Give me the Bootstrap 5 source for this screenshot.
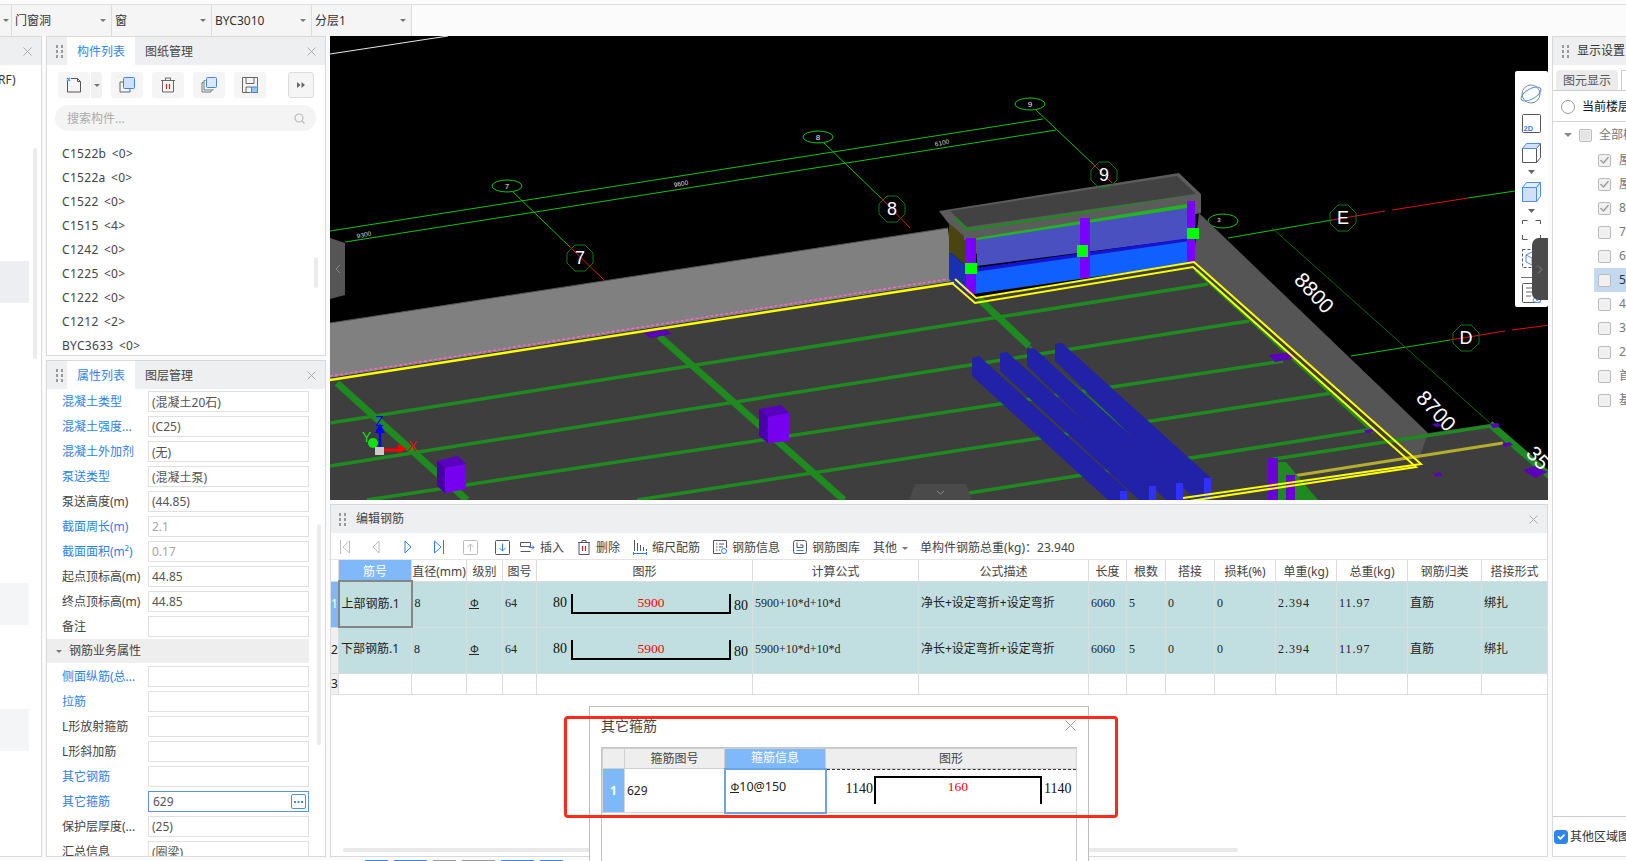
<!DOCTYPE html>
<html lang="zh-CN">
<head>
  <meta charset="UTF-8" />
  <meta name="viewport" content="width=device-width, initial-scale=1" />
  <title>编辑钢筋</title>
  <link href="https://cdn.jsdelivr.net/npm/bootstrap@5.3.0/dist/css/bootstrap.min.css" rel="stylesheet">
  <style>
    body {
      font-family: "Noto Sans", "Noto Sans CJK SC", sans-serif;
      font-size: 12px;
      color: #333;
      background: #fbfbfb;
      height: 861px;
      overflow: hidden;
    }

    /* top selects */
    .sel-bar { height: 32px; margin-top: 4px; border-top: 1px solid #e0e0e0; }
    .sel-item {
      width: 100px;
      background: #f5f5f5;
      border-right: 1px solid #ddd;
      padding: 0 5px 0 3px;
      position: relative;
    }
    .sel-stub { width: 12px; background: #f5f5f5; border-right: 1px solid #ddd; }
    .caret-down {
      display: inline-block;
      border-left: 3px solid transparent;
      border-right: 3px solid transparent;
      border-top: 3px solid #777;
    }

    .work-area { height: 821px; }
    .pane-box { background: #fff; border: 1px solid #d9d9d9; position: relative; overflow: hidden; }
    .pane-head { height: 28px; background: #eeeff1; flex-shrink: 0; }
    .drag-dots { width: 20px; flex-shrink: 0; display: flex; justify-content: flex-start; padding-left: 9px; }
    .pane-x { margin-left: auto; margin-right: 9px; }

    .pane-tabs .nav-link { color: #444; padding: 0; height: 28px; line-height: 30px; width: 68px; text-align: center; font-size: 12px; }
    .pane-tabs .nav-link.active { background: #fff; color: #2f86ea; }

    /* left cut-off pane */
    .pane-cut { width: 42px; border-left: 0; }
    .cut-text { margin: 7px 0 0 -2px; line-height: 16px; height: 16px; }
    .cut-hl { width: 29px; height: 42px; background: #f4f5f7; }
    .cut-hl-a { margin-top: 173px; background: #eceef2; }
    .cut-hl-b { margin-top: 280px; }
    .cut-hl-c { margin-top: 84px; }
    .thin-scroll { position: absolute; width: 4px; background: #ececec; border-radius: 2px; }

    .mid-col { width: 280px; margin-left: 4px; gap: 4px; }
    .list-pane { height: 320px; flex-shrink: 0; }
    .prop-pane { flex: 1 1 0; min-height: 0; }

    .icon-row { padding: 7px 11px 0 11px; height: 35px; }
    .icon-btn { width: 32px; height: 26px; padding: 0; background: #f5f5f5; border: 0; border-radius: 3px; display: flex; align-items: center; justify-content: center; }
    .icon-btn-drop { width: 12px; background: #f1f1f1; border-left: 1px solid #fff; border-radius: 0 3px 3px 0; }
    .icon-btn-more { width: 26px; border: 1px solid #ddd; margin-left: auto; }

    .find-box { margin: 5px 9px 0 8px; height: 26px; border-radius: 13px; background: #f4f4f4; padding: 1px 11px 0 12px; color: #aaa; }

    .part-list { margin-top: 10px; }
    .part-list .list-group-item { height: 24px; line-height: 25px; padding: 0 0 0 15px; border: 0; font-size: 12px; letter-spacing: .3px; word-spacing: 2px; color: #444; }

    /* property grid */
    .prop-line { height: 25px; padding-left: 15px; width: 263px; }
    .prop-name { width: 86px; flex-shrink: 0; white-space: nowrap; color: #444; }
    .prop-name.is-link { color: #2f7fe6; }
    .prop-line .form-control {
      height: 21px;
      min-height: 0;
      width: 161px;
      padding: 0 3px;
      font-size: 12px;
      line-height: 19px;
      border: 1px solid #e0e0e0;
      border-radius: 0;
      color: #555;
      flex-shrink: 0;
      box-shadow: none;
    }
    .prop-line .form-control.is-off { color: #a5a5a5; }
    .prop-group { height: 24px; margin-bottom: 1px; background: #eeeeee; width: 262px; padding-left: 9px; gap: 7px; color: #444; }
    .prop-edit { position: relative; width: 161px; flex-shrink: 0; }
    .prop-edit .form-control { border-color: #5b93e0; padding-left: 4px; }
    .more-dots {
      position: absolute; right: 3px; top: 3px; width: 15px; height: 15px;
      border: 1px solid #4b8fe6; border-radius: 2px; display: flex; align-items: center; justify-content: center;
    }

    /* centre */
    .mid-stage { width: 1218px; margin-left: 4px; gap: 4px; }
    .scene-box { height: 464px; position: relative; background: #000; overflow: hidden; flex-shrink: 0; }
    .scene-box svg { display: block; }
    .view-bar { position: absolute; left: 1185px; top: 35px; width: 33px; height: 236px; background: #fff; border-radius: 2px; }
    .view-grip {
      position: absolute; left: 1202px; top: 202px; width: 16px; height: 62px;
      background: #4a4a4a; border-radius: 7px 0 0 7px; display: flex; align-items: center; justify-content: center;
    }

    .rebar-pane { flex: 1 1 auto; overflow: visible; position: relative; }
    .rebar-title { font-size: 12px; color: #444; line-height: 30px; }
    .rebar-tools { height: 27px; padding-top: 2px; border-bottom: 1px solid #e4e4e4; margin-left: -2px; white-space: nowrap; }
    .nav-step { width: 31.5px; display: flex; justify-content: center; flex-shrink: 0; }
    .tool-item { margin-left: 13px; gap: 5px; color: #444; }
    .tool-item > span { margin-top: 2px; }
    .tool-first { margin-left: 2px; }
    .tool-sum { margin: 2px 0 0 12px; color: #444; }

    .rebar-grid, .hoop-grid { table-layout: fixed; border-collapse: collapse; --bs-table-bg: transparent; margin: 0; }
    .rebar-grid { width: 1217px; margin-left: -1px; }
    .table.rebar-grid > * > * > *,
    .table.hoop-grid > * > * > * {
      padding: 0 2px;
      font-size: 12px;
      font-weight: 400;
      color: #222;
      border: 1px solid #dcdcdc;
      vertical-align: middle;
      white-space: nowrap;
      overflow: hidden;
      box-shadow: none;
    }
    .table.rebar-grid > thead > tr > th { height: 21px; text-align: center; line-height: 16px; color: #444; padding: 4px 0 0; border-top: 0; }
    .table.rebar-grid > thead > tr > th.col-on,
    .table.hoop-grid > thead > tr > th.col-on { background: #80b9fa; color: #fff; }
    .table.rebar-grid > tbody > tr.bar-row > td { height: 46px; background: #c1dee0; padding-bottom: 2px; }
    .table.rebar-grid > tbody > tr.blank-row > td { height: 21px; }
    .table.rebar-grid > tbody > tr > td.row-no { padding: 0; text-align: center; background: #f0f0f0; }
    .table.rebar-grid > tbody > tr > td.row-no.is-on { background: #7db8f8; color: #fff; }
    .table.rebar-grid > tbody > tr > td.cell-on { border: 2px solid #868686; padding-bottom: 0; }
    .table.rebar-grid > tbody > tr > td.cell-num { font-family: "Liberation Serif", "Noto Sans CJK SC", serif; padding-left: 2px; }
    .table.rebar-grid > tbody > tr > td.cell-dec { letter-spacing: 1px; }
    .table.rebar-grid > tbody > tr > td.cell-shape { padding: 0 0 0 16px; }

    .bar-num { font-family: "Liberation Serif", serif; font-size: 14px; line-height: 16px; color: #111; margin-top: 1px; }
    .bar-num-end { margin-top: 4px; }
    .bar-shape {
      width: 160px; height: 20px; border: solid #000; border-width: 0 2px 2px 2px;
      color: #f00; text-align: center; margin: 0 3px 0 4px;
      font-family: "Liberation Serif", serif; font-size: 13.5px; line-height: 18px;
    }
    .rebar-sym {
      display: inline-block; font-family: "Liberation Sans", sans-serif; font-size: 11px; line-height: 10px;
      border-bottom: 1px solid #222; padding: 0 0 0 1px; color: #222; vertical-align: middle;
    }

    .slide-rail { position: absolute; left: 12px; top: 343px; width: 895px; height: 4px; background: #e9e9e9; border-radius: 2px; }

    /* hoop dialog */
    .hoop-dlg {
      position: absolute; left: 258px; top: 201px; width: 500px; height: 156px;
      background: #fff; border: 1px solid #bdbdbd; border-bottom: 0; z-index: 5; padding: 0 11px;
    }
    .hoop-head { height: 40px; padding-top: 9px; font-size: 14px; line-height: 20px; color: #444; position: relative; }
    .hoop-x { position: absolute; right: 1px; top: 13px; }
    .hoop-frame { height: 115px; border: solid #c4c4c4; border-width: 1px 1px 0 1px; }
    .hoop-grid { width: 474px; }
    .table.hoop-grid > thead > tr > th { height: 20px; background: #eeeeee; text-align: center; line-height: 18px; padding: 0; color: #444; border-color: #d0d0d0; }
    .table.hoop-grid > tbody > tr > td { height: 44px; border-color: #d4d4d4; }
    .table.hoop-grid > tbody > tr > td.row-no { background: #7db8f8; color: #fff; text-align: center; padding: 0; font-weight: 700; }
    .table.hoop-grid > tbody > tr > td.cell-on { border: 2px solid #6aa5e6; padding: 0 0 6px 4px; font-size: 12.5px; }
    .table.hoop-grid > tbody > tr > td.cell-draw { padding: 0; }
    .hoop-draw { height: 43px; border-top: 1px dashed #333; padding: 6px 0 0 19px; }
    .hoop-shape {
      width: 168px; height: 28px; border: solid #000; border-width: 2px 2px 0 2px; color: #f00; text-align: center; margin: 0 2px 0 1px;
      font-family: "Liberation Serif", serif; font-size: 13.5px; line-height: 18px;
    }
    .mark-box {
      position: absolute; left: 233px; top: 211px; width: 554px; height: 102px;
      border: 3px solid #ff2a1a; border-radius: 4px; z-index: 6; pointer-events: none;
    }

    /* right pane */
    .right-pane { width: 74px; margin-left: 4px; border-right: 0; white-space: nowrap; }
    .right-tabs { height: 26px; padding: 5px 0 0 3px; gap: 3px; border-bottom: 1px solid #ccc; }
    .right-tab { width: 62px; background: #ececec; border-radius: 4px 4px 0 0; text-align: center; line-height: 21px; color: #555; flex-shrink: 0; }
    .right-tab-b { width: 30px; background: #fff; border: 1px solid #ccc; border-bottom: 0; flex-shrink: 0; }
    .floor-radio { height: 31px; padding: 1px 0 0 8px; gap: 7px; border-bottom: 1px solid #d5d5d5; color: #111; }
    .floor-radio .form-check-input { width: 14px; height: 14px; margin: 0; border-color: #999; flex-shrink: 0; }
    .floor-tree { padding-top: 1px; }
    .floor-row { height: 24px; gap: 8px; color: #777; }
    .floor-root { padding-left: 11px; gap: 7px; margin-bottom: 1px; }
    .floor-root .caret-down { border-width: 4px 4px 0 4px; border-top-color: #888; }
    .floor-kid { padding-left: 45px; }
    .floor-kid.is-on { margin-left: 41px; padding-left: 4px; background: #c2d9ef; color: #333; }
    .tick-box { width: 13px; height: 13px; background: #f0f0f0; border: 1px solid #bbb; border-radius: 2px; flex-shrink: 0; display: flex; align-items: center; justify-content: center; }
    .right-foot { margin-top: auto; height: 40px; border-top: 1px solid #ccc; padding-left: 1px; gap: 2px; color: #333; }
    .right-foot .form-check-input { width: 14px; height: 14px; margin: 0; flex-shrink: 0; background-color: #2f86ea; border-color: #2f86ea; }

    .foot-marks { height: 4px; padding-left: 365px; gap: 6px; align-items: flex-end; }
    .foot-mark { height: 1px; width: 23px; background: #3f86e0; }
    .foot-mark.is-wide { width: 33px; }
    .foot-mark.is-grey { background: #999; }
  </style>
</head>
<body>
  <!-- selects -->
  <div class="sel-bar d-flex">
    <div class="sel-stub d-flex align-items-center justify-content-center"><span class="caret-down"></span></div>
    <div class="sel-item d-flex align-items-center justify-content-between"><span>门窗洞</span><span class="caret-down"></span></div>
    <div class="sel-item d-flex align-items-center justify-content-between"><span>窗</span><span class="caret-down"></span></div>
    <div class="sel-item d-flex align-items-center justify-content-between"><span>BYC3010</span><span class="caret-down"></span></div>
    <div class="sel-item d-flex align-items-center justify-content-between"><span>分层1</span><span class="caret-down"></span></div>
  </div>

  <div class="work-area d-flex">
    <!-- cut off pane on the far left -->
    <div class="pane-cut pane-box flex-shrink-0">
      <div class="pane-head d-flex align-items-center">
        <svg class="pane-x" width="9" height="9" viewBox="0 0 9 9"><path d="M.5.5l8 8M8.500.5l-8 8" stroke="#aaa" fill="none"/></svg>
      </div>
      <div class="cut-text">RF)</div>
      <div class="cut-hl cut-hl-a"></div>
      <div class="cut-hl cut-hl-b"></div>
      <div class="cut-hl cut-hl-c"></div>
      <div class="thin-scroll" style="left:33px;top:111px;height:211px"></div>
    </div>

    <div class="mid-col d-flex flex-column flex-shrink-0">
      <!-- part list -->
      <div class="list-pane pane-box">
        <div class="pane-head d-flex align-items-stretch">
          <div class="drag-dots align-items-center">
            <svg width="7" height="13" viewBox="0 0 7 13" fill="#999"><rect width="2" height="3"/><rect x="5" width="2" height="3"/><rect y="5" width="2" height="3"/><rect x="5" y="5" width="2" height="3"/><rect y="10" width="2" height="3"/><rect x="5" y="10" width="2" height="3"/></svg>
          </div>
          <ul class="nav pane-tabs">
            <li class="nav-item"><a class="nav-link active" href="#">构件列表</a></li>
            <li class="nav-item"><a class="nav-link" href="#">图纸管理</a></li>
          </ul>
          <svg class="pane-x align-self-center" width="9" height="9" viewBox="0 0 9 9"><path d="M.5.5l8 8M8.500.5l-8 8" stroke="#aaa" fill="none"/></svg>
        </div>
        <div class="icon-row d-flex" style="gap:0">
          <button class="btn icon-btn" type="button">
            <svg width="16" height="16" viewBox="0 0 16 16" fill="none"><path d="M1.500 4v11h13V4.500L11.500 1.500H5" stroke="#555"/><path d="M11.500 1.500v3h3" stroke="#555"/><path d="M1 1l3 3M4 1L1 4" stroke="#4d8fe6" stroke-width="1.300"/></svg>
          </button>
          <button class="btn icon-btn icon-btn-drop" type="button"><span class="caret-down"></span></button>
          <button class="btn icon-btn" type="button" style="margin-left:9px">
            <svg width="16" height="16" viewBox="0 0 16 16" fill="none"><path d="M4.500 5h-3.500v10h10v-3.500" stroke="#666"/><rect x="4.500" y=".5" width="11" height="11" rx="1" fill="#cfe0f8" stroke="#3f86e6"/></svg>
          </button>
          <button class="btn icon-btn" type="button" style="margin-left:9px">
            <svg width="14" height="16" viewBox="0 0 14 16" fill="none"><path d="M0 3.500h14M4.500 3V1h5v2" stroke="#666"/><path d="M1.500 3.500V15h11V3.500" stroke="#666"/><path d="M5.500 7v5M8.500 7v5" stroke="#e02020" stroke-width="1.200"/></svg>
          </button>
          <button class="btn icon-btn" type="button" style="margin-left:9px">
            <svg width="16" height="16" viewBox="0 0 16 16" fill="none"><path d="M2.500 5.500H1V15h9v-1.500" stroke="#777"/><path d="M4.500 3.500H3V13h9v-1" stroke="#777"/><rect x="5.500" y=".5" width="10" height="10" rx="1" fill="#dce8fa" stroke="#3f86e6"/></svg>
          </button>
          <button class="btn icon-btn" type="button" style="margin-left:9px">
            <svg width="16" height="16" viewBox="0 0 16 16" fill="none"><path d="M.5.500h15v9M.5.500v15h8" stroke="#666"/><path d="M4 1v5.500h8V1M4 15v-5h5" stroke="#666"/><rect x="9.500" y="10" width="6" height="5.500" fill="#9dc3f3" stroke="#3f86e6"/></svg>
          </button>
          <button class="btn icon-btn icon-btn-more" type="button">
            <svg width="8" height="6" viewBox="0 0 8 6" fill="#666"><path d="M0 0l3.500 3L0 6zM4.500 0L8 3 4.500 6z"/></svg>
          </button>
        </div>
        <div class="find-box d-flex align-items-center justify-content-between">
          <span>搜索构件...</span>
          <svg width="11" height="11" viewBox="0 0 11 11" fill="none"><circle cx="5" cy="5" r="4" stroke="#bbb" stroke-width="1.200"/><path d="M8 8l2.500 2.500" stroke="#bbb" stroke-width="1.200"/></svg>
        </div>
        <ul class="list-group list-group-flush part-list">
          <li class="list-group-item">C1522b &lt;0&gt;</li>
          <li class="list-group-item">C1522a &lt;0&gt;</li>
          <li class="list-group-item">C1522 &lt;0&gt;</li>
          <li class="list-group-item">C1515 &lt;4&gt;</li>
          <li class="list-group-item">C1242 &lt;0&gt;</li>
          <li class="list-group-item">C1225 &lt;0&gt;</li>
          <li class="list-group-item">C1222 &lt;0&gt;</li>
          <li class="list-group-item">C1212 &lt;2&gt;</li>
          <li class="list-group-item">BYC3633 &lt;0&gt;</li>
        </ul>
        <div class="thin-scroll" style="left:267px;top:220px;height:31px"></div>
      </div>

      <!-- properties -->
      <div class="prop-pane pane-box">
        <div class="pane-head d-flex align-items-stretch">
          <div class="drag-dots align-items-center">
            <svg width="7" height="13" viewBox="0 0 7 13" fill="#999"><rect width="2" height="3"/><rect x="5" width="2" height="3"/><rect y="5" width="2" height="3"/><rect x="5" y="5" width="2" height="3"/><rect y="10" width="2" height="3"/><rect x="5" y="10" width="2" height="3"/></svg>
          </div>
          <ul class="nav pane-tabs">
            <li class="nav-item"><a class="nav-link active" href="#">属性列表</a></li>
            <li class="nav-item"><a class="nav-link" href="#">图层管理</a></li>
          </ul>
          <svg class="pane-x align-self-center" width="9" height="9" viewBox="0 0 9 9"><path d="M.5.5l8 8M8.500.5l-8 8" stroke="#aaa" fill="none"/></svg>
        </div>
        <div class="prop-line d-flex align-items-center"><span class="prop-name is-link">混凝土类型</span><input class="form-control" value="(混凝土20石)" readonly></div>
        <div class="prop-line d-flex align-items-center"><span class="prop-name is-link">混凝土强度...</span><input class="form-control" value="(C25)" readonly></div>
        <div class="prop-line d-flex align-items-center"><span class="prop-name is-link">混凝土外加剂</span><input class="form-control" value="(无)" readonly></div>
        <div class="prop-line d-flex align-items-center"><span class="prop-name is-link">泵送类型</span><input class="form-control" value="(混凝土泵)" readonly></div>
        <div class="prop-line d-flex align-items-center"><span class="prop-name">泵送高度(m)</span><input class="form-control" value="(44.85)" readonly></div>
        <div class="prop-line d-flex align-items-center"><span class="prop-name is-link">截面周长(m)</span><input class="form-control is-off" value="2.1" readonly></div>
        <div class="prop-line d-flex align-items-center"><span class="prop-name is-link">截面面积(m²)</span><input class="form-control is-off" value="0.17" readonly></div>
        <div class="prop-line d-flex align-items-center"><span class="prop-name">起点顶标高(m)</span><input class="form-control" value="44.85" readonly></div>
        <div class="prop-line d-flex align-items-center"><span class="prop-name">终点顶标高(m)</span><input class="form-control" value="44.85" readonly></div>
        <div class="prop-line d-flex align-items-center"><span class="prop-name">备注</span><input class="form-control" readonly></div>
        <div class="prop-group d-flex align-items-center"><span class="caret-down"></span><span>钢筋业务属性</span></div>
        <div class="prop-line d-flex align-items-center"><span class="prop-name is-link">侧面纵筋(总...</span><input class="form-control" readonly></div>
        <div class="prop-line d-flex align-items-center"><span class="prop-name is-link">拉筋</span><input class="form-control" readonly></div>
        <div class="prop-line d-flex align-items-center"><span class="prop-name">L形放射箍筋</span><input class="form-control" readonly></div>
        <div class="prop-line d-flex align-items-center"><span class="prop-name">L形斜加筋</span><input class="form-control" readonly></div>
        <div class="prop-line d-flex align-items-center"><span class="prop-name is-link">其它钢筋</span><input class="form-control" readonly></div>
        <div class="prop-line d-flex align-items-center"><span class="prop-name is-link">其它箍筋</span>
          <div class="prop-edit">
            <input class="form-control" value="629" readonly>
            <span class="more-dots"><svg width="9" height="2" viewBox="0 0 9 2" fill="#3f86e6"><rect width="2" height="2"/><rect x="3.500" width="2" height="2"/><rect x="7" width="2" height="2"/></svg></span>
          </div>
        </div>
        <div class="prop-line d-flex align-items-center"><span class="prop-name">保护层厚度(...</span><input class="form-control" value="(25)" readonly></div>
        <div class="prop-line d-flex align-items-center"><span class="prop-name">汇总信息</span><input class="form-control" value="(圈梁)" readonly></div>
        <div class="thin-scroll" style="left:270px;top:163px;height:221px"></div>
      </div>
    </div>

    <div class="mid-stage d-flex flex-column flex-shrink-0">
      <!-- 3D view, drawn on page coordinates -->
      <div class="scene-box">
        <svg width="1218" height="464" viewBox="330 36 1218 464" font-family="'Liberation Sans', sans-serif">
          <defs>
            <polygon id="octa" points="-5,-13 5,-13 13,-5 13,5 5,13 -5,13 -13,5 -13,-5" fill="none" stroke="#0d7a0d"/>
          </defs>
          <rect x="330" y="36" width="1218" height="464" fill="#000"/>
          <path d="M330 54L448 36" stroke="#e8e8e8" fill="none"/>

          <!-- grid lines -->
          <g stroke="#12c412" fill="none">
            <path d="M330 231L1043 119M345 242L1056 130"/>
            <path d="M513 192L570 247M824 143L881 198M1036 110L1093 164"/>
            <path d="M1228 238L1332 220M1468 198L1515 191M1351 356L1450 340"/>
          </g>
          <g stroke="#e01010" fill="none">
            <path d="M570 247L604 280M881 198L910 228M1093 164L1112 183"/>
            <path d="M1332 220L1385 211M1392 210L1468 198M1450 340L1505 331M1512 330L1550 325"/>
          </g>
          <path d="M1272 228L1490 423" stroke="#0d6a0d" fill="none"/>
          <g fill="none" stroke="#12c412">
            <ellipse cx="507" cy="186" rx="15" ry="6"/>
            <ellipse cx="818" cy="137" rx="15" ry="6"/>
            <ellipse cx="1030" cy="104" rx="15" ry="6"/>
            <ellipse cx="1223" cy="221" rx="15" ry="7"/>
          </g>
          <g fill="#eee" font-size="8" text-anchor="middle">
            <text x="507" y="189">7</text>
            <text x="818" y="140">8</text>
            <text x="1030" y="107">9</text>
            <text x="1219" y="222" font-size="6">3</text>
          </g>
          <g fill="#ddd" font-size="6.500" text-anchor="middle">
            <text x="364" y="237" transform="rotate(-12 364 235)">9300</text>
            <text x="681" y="186" transform="rotate(-10 681 184)">9600</text>
            <text x="942" y="145" transform="rotate(-12 942 143)">6100</text>
          </g>

          <!-- floor, walls -->
          <polygon points="330,323 948,228 954,281 330,378" fill="#808080"/>
          <path d="M330 323L948 228" stroke="#555" fill="none"/>
          <polygon points="330,378 954,281 975,299 1193,263 1428,433 1490,424 1548,478 1548,500 330,500" fill="#3e3e3e"/>
          <polygon points="1193,263 1199,213 1428,433 1418,462" fill="#555"/>

          <!-- beams on the floor -->
          <g stroke="#1f8a1f" fill="none" stroke-width="3.500">
            <path d="M330 423L1208 284"/>
            <path d="M330 466L1249 321"/>
            <path d="M367 500L1283 361"/>
            <path d="M637 500L1332 393"/>
            <path d="M969 493L1374 429"/>
            <path d="M1274 459L1490 426"/>
          </g>
          <g stroke="#1f8a1f" fill="none" stroke-width="7">
            <path d="M337 383L467 500"/>
            <path d="M659 336L844 500"/>
            <path d="M979 299L1029 346"/>
            <path d="M1490 424L1550 476"/>
          </g>
          <path d="M1029 346L1191 486" stroke="#1f8a1f" stroke-width="2" fill="none"/>
          <path d="M1196 270L1374 432" stroke="#1f8a1f" stroke-width="4" fill="none"/>

          <!-- blue beams -->
          <g fill="#2222a8">
            <polygon points="972,358 979,356 1127,490 1127,500 1108,500 972,376"/>
            <polygon points="1000,353 1007,352 1156,486 1156,500 1139,500 1000,371"/>
            <polygon points="1027,349 1034,348 1183,483 1183,500 1166,500 1027,366"/>
            <polygon points="1055,344 1062,343 1211,478 1211,500 1196,500 1055,361"/>
          </g>
          <g fill="#3030ff">
            <rect x="1120" y="491" width="7" height="9"/>
            <rect x="1149" y="486" width="7" height="14"/>
            <rect x="1176" y="483" width="7" height="17"/>
            <rect x="1204" y="478" width="7" height="22"/>
          </g>

          <!-- lower right corner -->
          <path d="M1293 476L1503 443" stroke="#b5ad2c" stroke-width="3" fill="none"/>
          <polygon points="1278,462 1286,462 1318,500 1278,500" fill="#1f8a1f"/>
          <rect x="1268" y="458" width="10" height="42" fill="#6a00d8"/>
          <rect x="1286" y="475" width="9" height="25" fill="#6a00d8"/>
          <g fill="#5a00b8">
            <polygon points="1490,424 1498,423 1500,427 1493,428"/>
            <polygon points="1502,444 1510,442 1513,445 1505,447"/>
            <polygon points="1523,470 1535,466 1548,472 1535,478"/>
            <polygon points="1432,424 1438,423 1442,426 1436,427"/>
            <polygon points="1269,355 1290,352 1296,358 1275,362"/>
            <polygon points="644,333 665,329 672,334 650,338"/>
            <polygon points="1364,430 1372,429 1374,432 1366,433"/>
            <polygon points="1433,474 1440,472 1443,475 1436,477"/>
          </g>

          <!-- columns -->
          <g>
            <polygon points="437,461 458,456 466,464 445,468" fill="#5a00c0"/>
            <polygon points="437,461 445,468 445,493 437,486" fill="#4a00a8"/>
            <polygon points="445,468 466,464 466,489 445,493" fill="#7800f0"/>
            <polygon points="759,409 781,405 789,413 768,417" fill="#5a00c0"/>
            <polygon points="759,409 768,417 768,443 759,436" fill="#4a00a8"/>
            <polygon points="768,417 789,413 789,441 768,443" fill="#7800f0"/>
          </g>

          <!-- lift shaft -->
          <polygon points="939,211 1179,173 1201,194 1201,213 964,256 949,224" fill="#5c5c5c"/>
          <polygon points="950,211 1177,176 1196,194 967,227" fill="#424242"/>
          <polygon points="949,223 966,238 966,266 949,251" fill="#4a4510"/>
          <polygon points="949,251 966,266 966,293 949,279" fill="#1a30b0"/>
          <polygon points="973,269 1193,239 1193,263 973,294" fill="#1060ff"/>
          <polygon points="977,239 1187,208 1187,239 977,266" fill="#4b50c0"/>
          <polygon points="975,238 1187,204 1187,208 977,240" fill="#22b422"/>
          <polygon points="975,268 1190,238 1190,241 975,272" fill="#1515d0"/>
          <path d="M955 218L968 230L1192 196" stroke="#1f8a1f" stroke-width="2.500" fill="none"/>
          <polygon points="964,234 1197,194 1197,199 964,240" fill="#5c5c5c"/>
          <g fill="#7a00ff">
            <rect x="966" y="238" width="10" height="56"/>
            <rect x="1080" y="218" width="10" height="60"/>
            <rect x="1187" y="201" width="8" height="61"/>
          </g>
          <g fill="#00ff00">
            <rect x="965" y="263" width="12" height="11"/>
            <rect x="1077" y="245" width="11" height="12"/>
            <rect x="1187" y="228" width="12" height="11"/>
          </g>

          <!-- yellow outline -->
          <path d="M330 376L948 279" stroke="#ff66cc" stroke-width="1.500" stroke-dasharray="3 2" fill="none"/>
          <path d="M330 380L954 283" stroke="#ffff00" stroke-width="2.500" fill="none"/>
          <g stroke="#ffff00" stroke-width="2" fill="none">
            <path d="M952 283L975 303L1193 267L1416 467L1183 502"/>
            <path d="M955 279L976 298L1194 262L1421 464L1183 498"/>
          </g>

          <!-- axis marks -->
          <g fill="#fff" font-size="18" text-anchor="middle">
            <use href="#octa" x="580" y="258"/><text x="580" y="264">7</text>
            <use href="#octa" x="892" y="209"/><text x="892" y="215">8</text>
            <use href="#octa" x="1104" y="175"/><text x="1104" y="181">9</text>
            <use href="#octa" x="1343" y="218"/><text x="1343" y="224">E</text>
            <use href="#octa" x="1466" y="338"/><text x="1466" y="344">D</text>
          </g>
          <g fill="#fff" font-size="21" text-anchor="middle">
            <text x="1314" y="300" transform="rotate(47 1314 293)">8800</text>
            <text x="1436" y="418" transform="rotate(47 1436 411)">8700</text>
            <text x="1538" y="465" transform="rotate(47 1538 458)">35</text>
          </g>

          <!-- axis triad -->
          <path d="M380 455V425" stroke="#0000ff" stroke-width="2.500"/>
          <polygon points="380,423 375,433 385,433" fill="#0000ff"/>
          <path d="M380 450H402" stroke="#f00" stroke-width="3"/>
          <polygon points="407,449 398,444 398,453" fill="#f00"/>
          <circle cx="373" cy="443" r="5" fill="#12e012"/>
          <rect x="375" y="447" width="9" height="8" fill="#ccc"/>
          <g font-size="14">
            <text x="375" y="426" fill="#0000ff">Z</text>
            <text x="362" y="442" fill="#12e012">Y</text>
            <text x="408" y="451" fill="#f00">X</text>
          </g>

          <!-- handles -->
          <polygon points="330,238 345,243 345,295 330,299" fill="#555"/>
          <path d="M340 265l-4 4 4 4" stroke="#888" fill="none"/>
          <polygon points="909,500 915,484 966,484 972,500" fill="#4a4a4a"/>
          <path d="M937 491l3.500 3 3.500-3" stroke="#888" fill="none"/>
        </svg>

        <div class="view-bar">
          <svg width="33" height="236" viewBox="0 0 33 236" fill="none">
            <g stroke="#4d8fe6">
              <circle cx="16" cy="23" r="9" stroke="#888"/>
              <ellipse cx="16" cy="23" rx="11" ry="5" transform="rotate(-30 16 23)"/>
            </g>
            <rect x="7.500" y="43.500" width="18" height="18" rx="1" stroke="#555"/>
            <text x="8.500" y="60" font-family="'Liberation Sans',sans-serif" font-size="7.500" font-weight="700" fill="#2f7fe6">2D</text>
            <path d="M7.500 77.500h14v14h-14zM21.500 91.500l4-5v-14M21.500 77.500l4-5" stroke="#556"/>
            <polygon points="7.500,77.500 11.500,72.500 25.500,72.500 21.500,77.500" fill="#cfe0f8" stroke="#4d8fe6"/>
            <polygon points="13,99 20,99 16.500,103" fill="#666"/>
            <rect x="7.500" y="116.500" width="14" height="14" fill="#cfe0f8" stroke="#4d8fe6"/>
            <polygon points="7.500,116.500 11.500,111.500 25.500,111.500 21.500,116.500" fill="#e3edfb" stroke="#4d8fe6"/>
            <polygon points="21.500,116.500 25.500,111.500 25.500,125.500 21.500,130.500" fill="#e3edfb" stroke="#4d8fe6"/>
            <polygon points="13,138 20,138 16.500,142" fill="#666"/>
            <path d="M7.500 153v-3.500h5M20.500 149.500h5v3.500M25.500 164v4.500h-5M12.500 168.500h-5V164" stroke="#555"/>
            <rect x="7.500" y="178.500" width="18" height="18" stroke="#555" stroke-dasharray="3 2"/>
            <path d="M11 184l6-3 6 3v7l-6 3-6-3zM11 184l6 3 6-3M17 187v7" stroke="#4d8fe6"/>
            <path d="M6 206.500h12" stroke="#777"/>
            <rect x="7.500" y="212.500" width="18" height="19" rx="1" stroke="#555"/>
            <path d="M11 217h8M11 221h8M11 225h5" stroke="#666"/>
            <ellipse cx="22" cy="229" rx="4" ry="2.500" fill="#fff" stroke="#4d8fe6"/>
            <circle cx="22" cy="229" r="1" fill="#4d8fe6"/>
          </svg>
        </div>
        <div class="view-grip"><svg width="6" height="9" viewBox="0 0 6 9" fill="none"><path d="M1 .5l4 4-4 4" stroke="#888"/></svg></div>
      </div>

      <!-- edit rebar -->
      <div class="rebar-pane pane-box">
        <div class="pane-head d-flex align-items-center">
          <div class="drag-dots" style="width:25px;padding-left:8px">
            <svg width="7" height="13" viewBox="0 0 7 13" fill="#999"><rect width="2" height="3"/><rect x="5" width="2" height="3"/><rect y="5" width="2" height="3"/><rect x="5" y="5" width="2" height="3"/><rect y="10" width="2" height="3"/><rect x="5" y="10" width="2" height="3"/></svg>
          </div>
          <span class="rebar-title">编辑钢筋</span>
          <svg class="pane-x" width="9" height="9" viewBox="0 0 9 9"><path d="M.5.5l8 8M8.500.5l-8 8" stroke="#aaa" fill="none"/></svg>
        </div>
        <div class="rebar-tools d-flex align-items-center">
          <span class="nav-step"><svg width="10" height="14" viewBox="0 0 10 14" fill="none"><path d="M.5 0v14M9.500 1L3 7l6.500 6z" stroke="#bbb"/></svg></span>
          <span class="nav-step"><svg width="8" height="14" viewBox="0 0 8 14" fill="none"><path d="M7 1L1 7l6 6z" stroke="#bbb"/></svg></span>
          <span class="nav-step"><svg width="8" height="14" viewBox="0 0 8 14" fill="none"><path d="M1 1l6 6-6 6z" stroke="#2f7fe6"/></svg></span>
          <span class="nav-step"><svg width="10" height="14" viewBox="0 0 10 14" fill="none"><path d="M9.500 0v14M.5 1L7 7 .5 13z" stroke="#2f7fe6"/></svg></span>
          <span class="nav-step"><svg width="15" height="15" viewBox="0 0 15 15" fill="none"><rect x=".5" y=".5" width="14" height="14" rx="1" stroke="#bbb"/><path d="M7.500 11.500V4M4.500 7l3-3 3 3" stroke="#bbb"/></svg></span>
          <span class="nav-step"><svg width="15" height="15" viewBox="0 0 15 15" fill="none"><rect x=".5" y=".5" width="14" height="14" rx="1" stroke="#556"/><path d="M7.500 3.500V11M4.500 8l3 3 3-3" stroke="#2f7fe6"/></svg></span>
          <span class="tool-item tool-first d-flex align-items-center">
            <svg width="15" height="13" viewBox="0 0 15 13" fill="none"><path d="M.5 1.500h10v4H.5zM.5 10.500h10" stroke="#556"/><path d="M9 6.500h5M12 4.500l2 2-2 2" stroke="#2f7fe6"/></svg>
            <span>插入</span>
          </span>
          <span class="tool-item d-flex align-items-center">
            <svg width="14" height="15" viewBox="0 0 14 15" fill="none"><path d="M1 2.500h12M5 2V.5h4V2" stroke="#556"/><path d="M2 2.500V14.500h10V2.500" stroke="#556"/><path d="M5.500 6v5M8.500 6v5" stroke="#e02020" stroke-width="1.200"/></svg>
            <span>删除</span>
          </span>
          <span class="tool-item d-flex align-items-center">
            <svg width="14" height="15" viewBox="0 0 14 15" fill="none"><path d="M1.500 0v11M4.500 3v8M7.500 5v6M10.500 7v4M13.500 9v2" stroke="#556"/><path d="M0 13.500h14M.5 12v3M13.500 12v3" stroke="#2f7fe6"/></svg>
            <span>缩尺配筋</span>
          </span>
          <span class="tool-item d-flex align-items-center">
            <svg width="14" height="14" viewBox="0 0 14 14" fill="none"><path d="M8 13.500H.5V.5h13V8" stroke="#556"/><path d="M3 4h1.500M6 4h5M3 7h1.500M6 7h4M3 10h1.500M6 10h1" stroke="#556"/><circle cx="11" cy="11" r="2.500" stroke="#2f7fe6"/></svg>
            <span>钢筋信息</span>
          </span>
          <span class="tool-item d-flex align-items-center">
            <svg width="14" height="14" viewBox="0 0 14 14" fill="none"><rect x=".5" y=".5" width="13" height="13" rx="2" stroke="#556"/><path d="M4 2.500v5h6V5H7" stroke="#556"/><path d="M3.500 10.500h7" stroke="#2f7fe6"/></svg>
            <span>钢筋图库</span>
          </span>
          <span class="tool-item d-flex align-items-center"><span>其他</span><span class="caret-down"></span></span>
          <span class="tool-sum">单构件钢筋总重(kg)：23.940</span>
        </div>

        <table class="table rebar-grid">
          <colgroup>
            <col style="width:8px"><col style="width:73px"><col style="width:55px"><col style="width:36px"><col style="width:34px"><col style="width:216px"><col style="width:166px"><col style="width:170px"><col style="width:38px"><col style="width:39px"><col style="width:49px"><col style="width:61px"><col style="width:61px"><col style="width:71px"><col style="width:74px"><col style="width:66px">
          </colgroup>
          <thead>
            <tr><th></th><th class="col-on">筋号</th><th>直径(mm)</th><th>级别</th><th>图号</th><th>图形</th><th>计算公式</th><th>公式描述</th><th>长度</th><th>根数</th><th>搭接</th><th>损耗(%)</th><th>单重(kg)</th><th>总重(kg)</th><th>钢筋归类</th><th>搭接形式</th></tr>
          </thead>
          <tbody>
            <tr class="bar-row">
              <td class="row-no is-on">1</td>
              <td class="cell-on">上部钢筋.1</td>
              <td class="cell-num">8</td>
              <td><span class="rebar-sym">Φ</span></td>
              <td class="cell-num">64</td>
              <td class="cell-shape"><div class="d-flex align-items-start"><span class="bar-num">80</span><div class="bar-shape">5900</div><span class="bar-num bar-num-end">80</span></div></td>
              <td class="cell-num">5900+10*d+10*d</td>
              <td>净长+设定弯折+设定弯折</td>
              <td class="cell-num">6060</td>
              <td class="cell-num">5</td>
              <td class="cell-num">0</td>
              <td class="cell-num">0</td>
              <td class="cell-num cell-dec">2.394</td>
              <td class="cell-num cell-dec">11.97</td>
              <td>直筋</td>
              <td>绑扎</td>
            </tr>
            <tr class="bar-row">
              <td class="row-no">2</td>
              <td>下部钢筋.1</td>
              <td class="cell-num">8</td>
              <td><span class="rebar-sym">Φ</span></td>
              <td class="cell-num">64</td>
              <td class="cell-shape"><div class="d-flex align-items-start"><span class="bar-num">80</span><div class="bar-shape">5900</div><span class="bar-num bar-num-end">80</span></div></td>
              <td class="cell-num">5900+10*d+10*d</td>
              <td>净长+设定弯折+设定弯折</td>
              <td class="cell-num">6060</td>
              <td class="cell-num">5</td>
              <td class="cell-num">0</td>
              <td class="cell-num">0</td>
              <td class="cell-num cell-dec">2.394</td>
              <td class="cell-num cell-dec">11.97</td>
              <td>直筋</td>
              <td>绑扎</td>
            </tr>
            <tr class="blank-row">
              <td class="row-no">3</td><td></td><td></td><td></td><td></td><td></td><td></td><td></td><td></td><td></td><td></td><td></td><td></td><td></td><td></td><td></td>
            </tr>
          </tbody>
        </table>

        <div class="slide-rail"></div>

        <div class="hoop-dlg">
          <div class="hoop-head">其它箍筋
            <svg class="hoop-x" width="11" height="11" viewBox="0 0 11 11"><path d="M.5.5l10 10M10.500.5l-10 10" stroke="#999" fill="none"/></svg>
          </div>
          <div class="hoop-frame">
            <table class="table hoop-grid">
              <colgroup><col style="width:22px"><col style="width:100px"><col style="width:101px"><col style="width:251px"></colgroup>
              <thead><tr><th></th><th>箍筋图号</th><th class="col-on">箍筋信息</th><th>图形</th></tr></thead>
              <tbody>
                <tr>
                  <td class="row-no">1</td>
                  <td>629</td>
                  <td class="cell-on"><span class="rebar-sym">Φ</span>10@150</td>
                  <td class="cell-draw">
                    <div class="hoop-draw d-flex align-items-start">
                      <span class="bar-num" style="margin-top:5px">1140</span>
                      <div class="hoop-shape">160</div>
                      <span class="bar-num" style="margin-top:5px">1140</span>
                    </div>
                  </td>
                </tr>
              </tbody>
            </table>
          </div>
        </div>
        <div class="mark-box"></div>
      </div>
    </div>

    <!-- display settings, runs off the window -->
    <div class="right-pane pane-box d-flex flex-column flex-shrink-0">
      <div class="pane-head d-flex align-items-center flex-shrink-0">
        <div class="drag-dots" style="width:24px">
          <svg width="7" height="13" viewBox="0 0 7 13" fill="#999"><rect width="2" height="3"/><rect x="5" width="2" height="3"/><rect y="5" width="2" height="3"/><rect x="5" y="5" width="2" height="3"/><rect y="10" width="2" height="3"/><rect x="5" y="10" width="2" height="3"/></svg>
        </div>
        <span>显示设置</span>
      </div>
      <div class="right-tabs d-flex flex-shrink-0"><div class="right-tab">图元显示</div><div class="right-tab-b"></div></div>
      <div class="floor-radio d-flex align-items-center flex-shrink-0"><input class="form-check-input" type="radio"><span>当前楼层</span></div>
      <div class="floor-tree">
        <div class="floor-row floor-root d-flex align-items-center"><span class="caret-down"></span><span class="tick-box"><svg width="9" height="9" viewBox="0 0 9 9"><rect width="9" height="9" fill="#e4e4e4"/></svg></span><span>全部楼层</span></div>
        <div class="floor-row floor-kid d-flex align-items-center"><span class="tick-box"><svg width="9" height="8" viewBox="0 0 9 8" fill="none"><path d="M.5 4l3 3 5-6" stroke="#999" stroke-width="1.300"/></svg></span><span>屋面层</span></div>
        <div class="floor-row floor-kid d-flex align-items-center"><span class="tick-box"><svg width="9" height="8" viewBox="0 0 9 8" fill="none"><path d="M.5 4l3 3 5-6" stroke="#999" stroke-width="1.300"/></svg></span><span>屋顶层</span></div>
        <div class="floor-row floor-kid d-flex align-items-center"><span class="tick-box"><svg width="9" height="8" viewBox="0 0 9 8" fill="none"><path d="M.5 4l3 3 5-6" stroke="#999" stroke-width="1.300"/></svg></span><span>8层</span></div>
        <div class="floor-row floor-kid d-flex align-items-center"><span class="tick-box"></span><span>7层</span></div>
        <div class="floor-row floor-kid d-flex align-items-center"><span class="tick-box"></span><span>6层</span></div>
        <div class="floor-row floor-kid is-on d-flex align-items-center"><span class="tick-box"></span><span>5层</span></div>
        <div class="floor-row floor-kid d-flex align-items-center"><span class="tick-box"></span><span>4层</span></div>
        <div class="floor-row floor-kid d-flex align-items-center"><span class="tick-box"></span><span>3层</span></div>
        <div class="floor-row floor-kid d-flex align-items-center"><span class="tick-box"></span><span>2层</span></div>
        <div class="floor-row floor-kid d-flex align-items-center"><span class="tick-box"></span><span>首层</span></div>
        <div class="floor-row floor-kid d-flex align-items-center"><span class="tick-box"></span><span>基础层</span></div>
      </div>
      <div class="right-foot d-flex align-items-center"><input class="form-check-input" type="checkbox" checked><span>其他区域图元</span></div>
    </div>
  </div>

  <div class="foot-marks d-flex">
    <span class="foot-mark"></span><span class="foot-mark is-wide"></span><span class="foot-mark is-grey"></span><span class="foot-mark is-grey is-wide"></span><span class="foot-mark is-wide"></span><span class="foot-mark"></span>
  </div>

  <script src="https://cdn.jsdelivr.net/npm/bootstrap@5.3.0/dist/js/bootstrap.bundle.min.js"></script>
</body>
</html>
